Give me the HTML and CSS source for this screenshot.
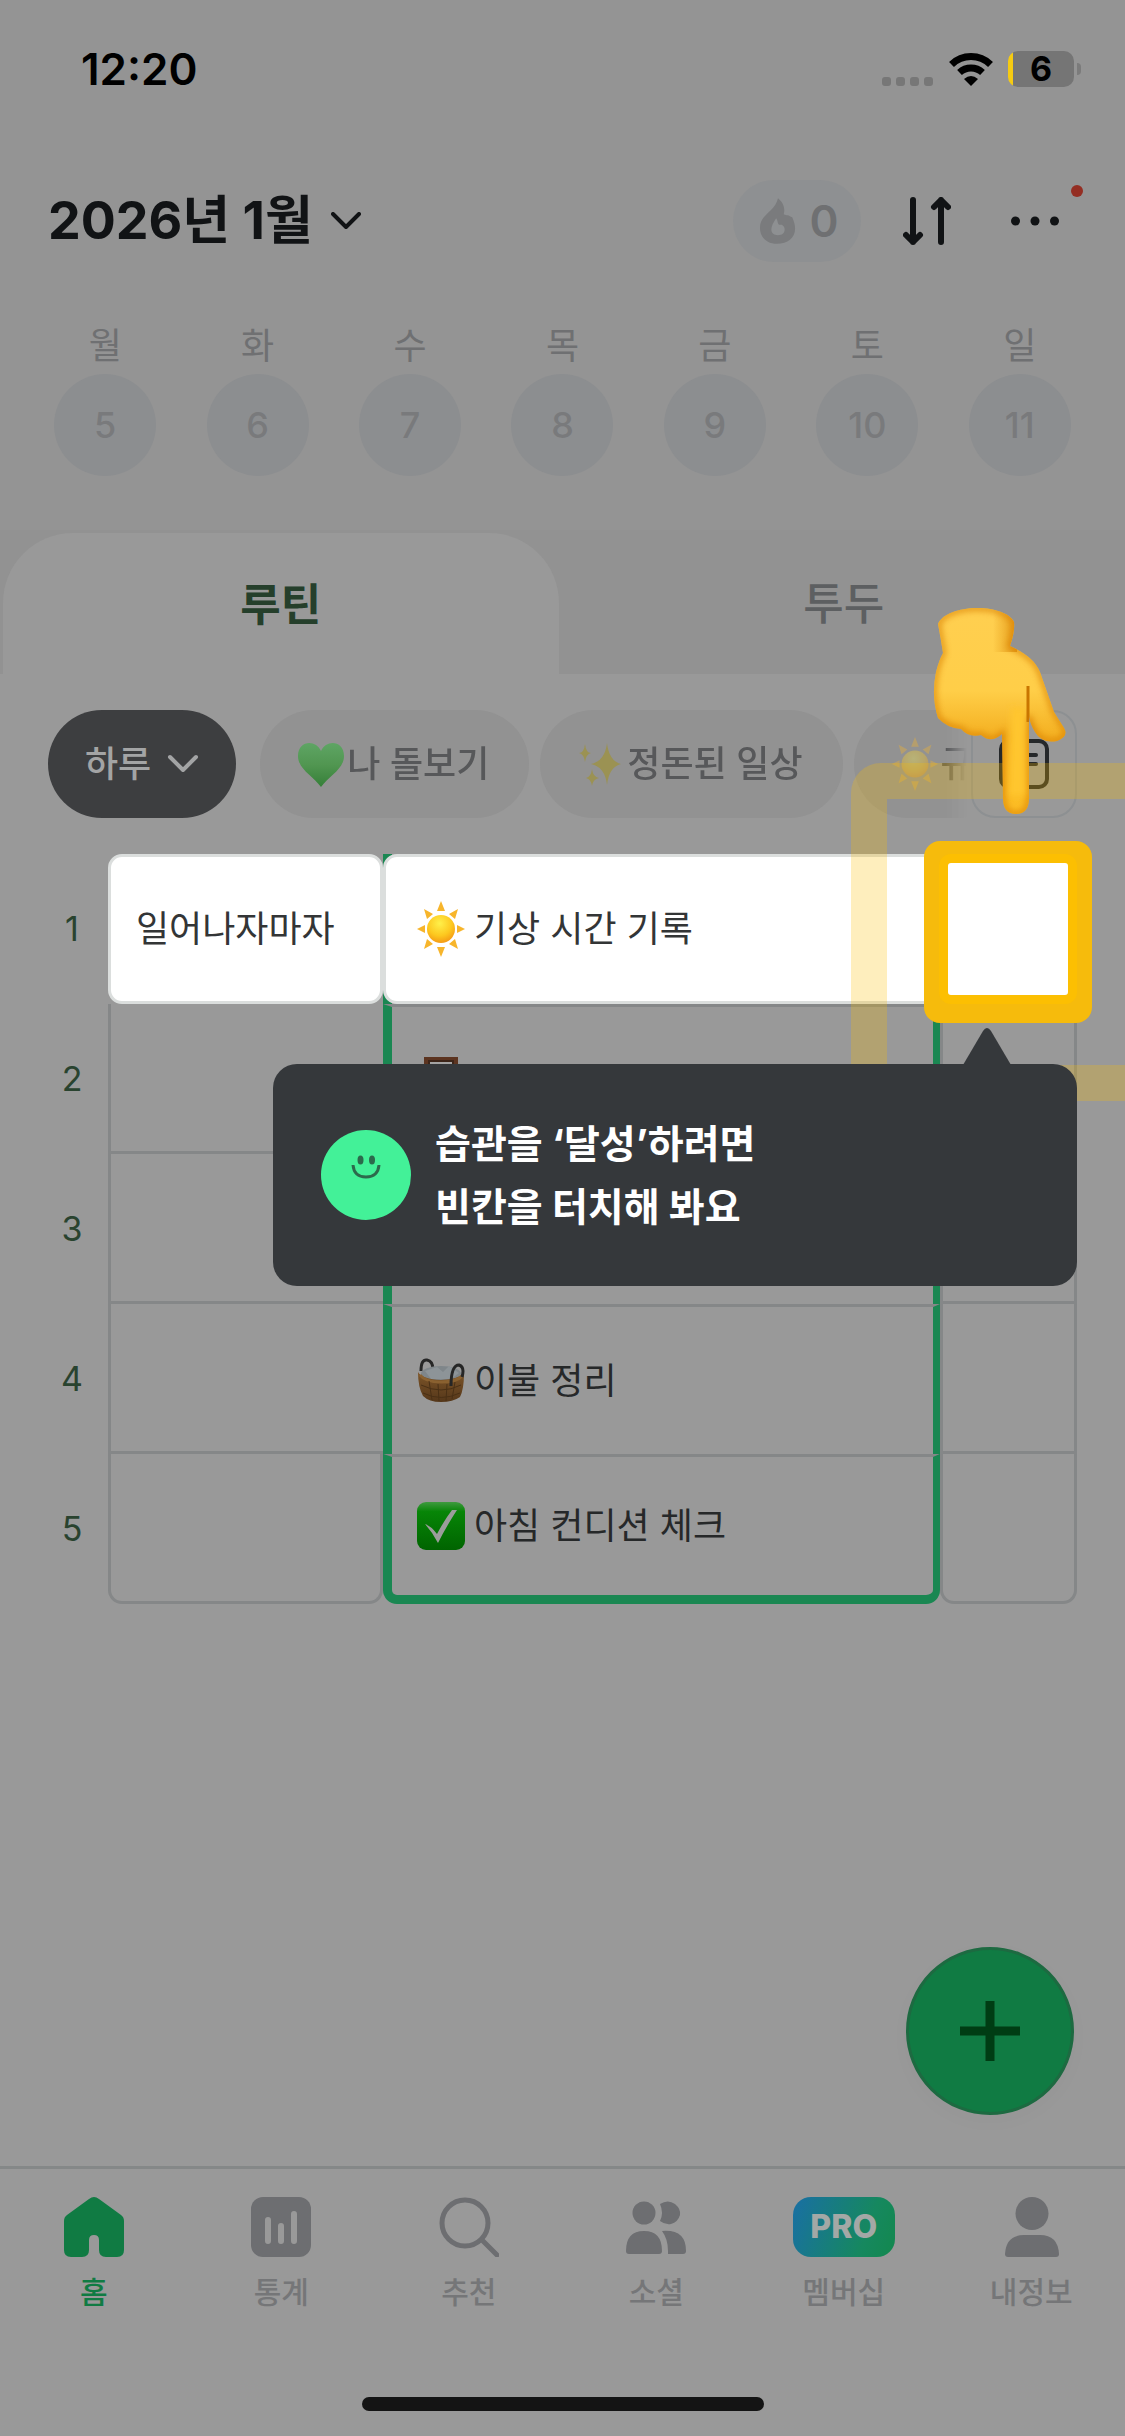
FILE: index.html
```html
<!DOCTYPE html>
<html lang="ko">
<head>
<meta charset="utf-8">
<meta name="viewport" content="width=device-width, initial-scale=1">
<title>루틴</title>
<link rel="stylesheet" href="styles.css">
</head>
<body>
<svg class="defs" aria-hidden="true">
  <defs>
    <radialGradient id="sunFill" cx=".45" cy=".3" r=".8"><stop offset="0" stop-color="#fff04a"/><stop offset=".55" stop-color="#fdc81f"/><stop offset="1" stop-color="#f28a10"/></radialGradient>
    <linearGradient id="heartFill" x1="0" y1="0" x2="0" y2="1"><stop offset="0" stop-color="#5ea564"/><stop offset=".5" stop-color="#519651"/><stop offset="1" stop-color="#357f38"/></linearGradient>
    <linearGradient id="handFill" x1="0" y1="0" x2="0" y2="1"><stop offset="0" stop-color="#ffcf50"/><stop offset=".4" stop-color="#ffce48"/><stop offset=".62" stop-color="#f4b021"/><stop offset="1" stop-color="#fdbf25"/></linearGradient>
    <linearGradient id="wristShade" x1="0" y1="0" x2="1" y2="0"><stop offset="0" stop-color="#d98400" stop-opacity="0"/><stop offset="1" stop-color="#d98400"/></linearGradient>
    <linearGradient id="checkFill" x1="0" y1="0" x2="0" y2="1"><stop offset="0" stop-color="#3f9a3f"/><stop offset=".2" stop-color="#078507"/><stop offset="1" stop-color="#006400"/></linearGradient>
    <linearGradient id="basketFill" x1="0" y1="0" x2="0" y2="1"><stop offset="0" stop-color="#7d5528"/><stop offset="1" stop-color="#55371a"/></linearGradient>
    <filter id="soft" x="-20%" y="-20%" width="140%" height="140%"><feGaussianBlur stdDeviation="3"/></filter>
    <clipPath id="handClip"><path d="M5 16 C14 -5 72 -5 81 14 Q82 24 77 38 C92 45 102 52 107 64 L121 104 L131 120 Q136 129 124 133 Q109 136 102 124 Q97 116 96 108 L96 190 Q96 206 83 206 Q70 206 70 190 L69 126 Q58 136 48 127 Q36 130 28 121 Q14 120 5 110 Q-2 88 3 64 Q6 52 10 45 Q8 32 5 16Z"/></clipPath>
    <symbol id="sun" viewBox="0 0 48 56">
      <path fill="#f7b52b" d="M24 0l4 10h-8zM24 56l4-10h-8zM0 28l8-4v8zM48 28l-8-4v8zM7 8l9 5-6 5zM41 8l-9 5 6 5zM7 48l9-5-6-5zM41 48l-9-5 6-5z"/>
      <circle cx="24" cy="28" r="14" fill="url(#sunFill)"/>
    </symbol>
  </defs>
</svg>

<header class="top">
  <div class="status">
    <time class="clock">12:20</time>
    <div class="status-icons">
      <div class="signal"><i></i><i></i><i></i><i></i></div>
      <svg class="wifi" viewBox="0 0 46 34" aria-label="Wi-Fi"><path d="M3.500 12.500a28 28 0 0 1 39 0" fill="none" stroke="#000" stroke-width="7"/><path d="M11.500 20.500a17 17 0 0 1 23 0" fill="none" stroke="#000" stroke-width="7"/><path d="M16 27q7-6 14 0l-7 7z"/></svg>
      <div class="battery"><span>6</span></div>
      <i class="battery-cap"></i>
    </div>
  </div>

  <div class="title-bar">
    <button class="month">2026년 1월
      <svg width="30" height="18" viewBox="0 0 30 18"><path d="M2 2l13 13L28 2"/></svg>
    </button>
    <div class="actions">
      <button class="streak">
        <svg width="38" height="48" viewBox="0 0 40 48"><path fill="#7a7b7d" fill-rule="evenodd" d="M20 0c5 4 8 10 6 17 2 1 3 1 4 1 2 0 3 2 5 2 2 5 3 8 3 12C38 42 30 48 19 48 8 48 1 41 1 31 1 17 17 14 20 0zM18 21c-3 5-5 8-5 12 0 4 3 6 7 6s7-2 7-6c0-2-1-4-3-5h-3c-2-2-1-5-3-7z"/></svg>
        0
      </button>
      <button class="icon-button" aria-label="정렬"><svg width="48" height="48" viewBox="0 0 48 48"><path d="M10 3v42M3 38l7 7 7-7M38 45V3M31 10l7-7 7 7"/></svg></button>
      <button class="icon-button more" aria-label="더보기"><svg width="48" height="48" viewBox="0 0 48 48"><g fill="#111315" stroke="none"><circle cx="4.500" cy="24" r="4.500"/><circle cx="24" cy="24" r="4.500"/><circle cx="43.500" cy="24" r="4.500"/></g></svg><i class="alert"></i></button>
    </div>
  </div>

  <div class="week">
    <div class="day"><span>월</span><button>5</button></div>
    <div class="day"><span>화</span><button>6</button></div>
    <div class="day"><span>수</span><button>7</button></div>
    <div class="day"><span>목</span><button>8</button></div>
    <div class="day"><span>금</span><button>9</button></div>
    <div class="day"><span>토</span><button>10</button></div>
    <div class="day"><span>일</span><button>11</button></div>
  </div>

  <div class="tabs" role="tablist">
    <button class="tab active" role="tab" aria-selected="true">루틴</button>
    <button class="tab" role="tab" aria-selected="false">투두</button>
  </div>
</header>

<main class="content">
  <div class="filters">
    <button class="chip period">하루 <svg width="32" height="20" viewBox="0 0 32 20"><path d="M3 3l13 13L29 3"/></svg></button>
    <div class="chip-list">
      <button class="chip"><svg width="48" height="47" viewBox="0 0 48 47"><path fill="url(#heartFill)" d="M24 10C29-2 47-1 47 15 47 28 32 35 24 46 16 35 1 28 1 15 1-1 19-2 24 10z"/></svg>나 돌보기</button>
      <button class="chip"><svg width="48" height="54" viewBox="0 0 48 54"><path fill="#9b9253" d="M30 6q2 18 14 21-12 3-14 21-2-18-16-21 14-3 16-21zM8 7q1 9 6 9-5 1-6 9-1-8-6-9 5 0 6-9zM15 32q1 8 7 9-6 1-7 8-1-7-6-8 5-1 6-9z"/></svg>정돈된 일상</button>
      <button class="chip"><svg class="muted" width="48" height="54"><use href="#sun"/></svg>규</button>
    </div>
    <button class="list-button" aria-label="목록"><svg width="50" height="50" viewBox="0 0 50 50"><rect x="2" y="2" width="46" height="46" rx="8"/><path d="M14 16h23M14 25h23"/></svg></button>
  </div>

  <table class="routines">
    <colgroup><col class="col-no"><col class="col-when"><col><col class="col-check"></colgroup>
    <tbody>
      <tr class="current">
        <th scope="row">1</th>
        <td class="when"><div class="card">일어나자마자</div></td>
        <td class="habit"><div class="card"><svg class="emoji" width="48" height="56"><use href="#sun"/></svg>기상 시간 기록</div></td>
        <td class="check">
          <i class="ripple"></i>
          <button class="target" aria-label="달성"></button>
          <svg class="hand" viewBox="0 0 134 207" aria-hidden="true">
            <g clip-path="url(#handClip)">
              <rect width="134" height="207" fill="url(#handFill)"/>
              <rect x="60" width="24" height="44" fill="url(#wristShade)" opacity=".7"/>
              <path d="M5 16 C14 -5 72 -5 81 14 Q82 24 77 38 C92 45 102 52 107 64 L121 104 L131 120 Q136 129 124 133 Q109 136 102 124 Q97 116 96 108 L96 190 Q96 206 83 206 Q70 206 70 190 L69 126 Q58 136 48 127 Q36 130 28 121 Q14 120 5 110 Q-2 88 3 64 Q6 52 10 45 Q8 32 5 16Z" fill="none" stroke="#d97f00" stroke-width="5" opacity=".8" filter="url(#soft)"/>
              <path d="M78 100h14v88H76z" fill="#ffc62f" filter="url(#soft)"/>
              <path d="M95 78v36" stroke="#c97600" stroke-width="3"/>
            </g>
          </svg>
          <div class="tooltip" role="tooltip">
            <svg class="arrow" width="50" height="38" viewBox="0 0 50 38"><path d="M1 38L21 4q4-6 8 0l20 34z"/></svg>
            <svg class="face" width="90" height="90" viewBox="0 0 90 90"><circle cx="45" cy="45" r="45" fill="#43f198"/><ellipse cx="39.500" cy="30" rx="3" ry="4.500" fill="#2c6a4c"/><ellipse cx="51" cy="30" rx="3" ry="4.500" fill="#2c6a4c"/><path d="M32 35q1 12 13 12t13-12" fill="none" stroke="#2c6a4c" stroke-width="3"/></svg>
            <p>습관을 ‘달성’하려면<br>빈칸을 터치해 봐요</p>
          </div>
        </td>
      </tr>
      <tr>
        <th scope="row">2</th><td class="when"></td>
        <td class="habit"><div class="item"><svg class="emoji" width="48" height="48" viewBox="0 0 48 48"><rect x="9" y="1" width="30" height="46" fill="#999" stroke="#5c3420" stroke-width="4"/><rect x="12" y="4" width="24" height="40" fill="#a3a3a3" stroke="#3c2418" stroke-width="2"/></svg></div></td>
        <td class="check"></td>
      </tr>
      <tr><th scope="row">3</th><td class="when"></td><td class="habit"></td><td class="check"></td></tr>
      <tr>
        <th scope="row">4</th><td class="when"></td>
        <td class="habit"><div class="item"><svg class="emoji" width="48" height="48" viewBox="0 0 48 48"><path d="M4 14Q4 2 10 3q6 1 6 10" fill="none" stroke="#262626" stroke-width="3"/><ellipse cx="24" cy="17" rx="20" ry="8" fill="#7f868a"/><path d="M8 14l12-4 6 5 6-6 10 7-8 6H14z" fill="#8d9498"/><path fill="url(#basketFill)" d="M1 15q4 7 23 8 18-1 23-7 0 16-4 24-7 5-19 5T6 39Q1 30 1 15z"/><path d="M3 18q5 7 21 7t21-6" fill="none" stroke="#8a6130" stroke-width="3"/><path d="M4 28q20 10 40 0M6 36q18 9 37 0M12 24l3 19M21 27l1 17M30 27l-1 17M38 25l-3 17" fill="none" stroke="#4a3015" stroke-width="1"/><path d="M34 29Q34 8 42 8q6 2 3 12" fill="none" stroke="#262626" stroke-width="3"/></svg>이불 정리</div></td>
        <td class="check"></td>
      </tr>
      <tr class="last">
        <th scope="row">5</th><td class="when"></td>
        <td class="habit"><div class="item"><svg class="emoji" width="48" height="48" viewBox="0 0 48 48"><rect width="48" height="48" rx="9" fill="url(#checkFill)"/><path d="M8 22q6 2 12 10Q28 17 35 8h5Q29 25 21 41q-5-10-13-19z" fill="#9b9d9b"/></svg>아침 컨디션 체크</div></td>
        <td class="check"></td>
      </tr>
    </tbody>
  </table>

  <button class="add" aria-label="추가"><svg width="60" height="60" viewBox="0 0 60 60"><path d="M30 0v60M0 30h60"/></svg></button>
</main>

<footer class="bottom">
  <nav class="nav">
    <a class="active" href="#home"><svg width="60" height="60" viewBox="0 0 60 60"><path fill="#107b43" d="M25 2q5-4 10 0l22 16q3 2 3 6v29q0 7-7 7H42q-7 0-7-7V43q0-5-5-5t-5 5v10q0 7-7 7H7q-7 0-7-7V24q0-4 3-6z"/></svg>홈</a>
    <a href="#stats"><svg width="60" height="60" viewBox="0 0 60 60"><rect width="60" height="60" rx="12" fill="#6d6e71"/><path d="M17 23v21M30 29v15M43 17v27" stroke="#999" stroke-width="6" stroke-linecap="round"/></svg>통계</a>
    <a href="#discover"><svg width="60" height="60" viewBox="0 0 60 60"><circle cx="26" cy="26" r="23" fill="none" stroke="#6d6e71" stroke-width="5"/><path d="M43 43l15 15" stroke="#6d6e71" stroke-width="5" stroke-linecap="round"/></svg>추천</a>
    <a href="#social"><svg width="60" height="60" viewBox="0 0 60 60" fill="#6d6e71"><circle cx="18" cy="16" r="11.500"/><path d="M34 7q8-5 15 0 6 5 5 11-2 7-9 9-6 1-11-3 4-8 0-17zM0 54Q0 34 18 34t18 20q0 3-3 3H3q-3 0-3-3zM36 34q24-2 24 20 0 3-3 3H42V54q0-12-6-20z"/></svg>소셜</a>
    <a href="#membership"><span class="pro">PRO</span>멤버십</a>
    <a href="#me"><svg width="60" height="60" viewBox="0 0 60 60" fill="#6d6e71"><circle cx="31" cy="16.500" r="16.500"/><path d="M4 57Q5 38 23 38h16q18 0 19 19 0 3-3 3H7q-3 0-3-3z"/></svg>내정보</a>
  </nav>
  <i class="home-indicator"></i>
</footer>
</body>
</html>
```
FILE: styles.css
```css
* { box-sizing: border-box; }

body {
  margin: 0;
  min-height: 100vh;
  display: flex;
  flex-direction: column;
  overflow-x: hidden;
  background: #999;
  color: #262829;
  font-family: Inter, "Noto Sans CJK KR", sans-serif;
  font-size: 36px;
  line-height: 44px;
}

button {
  margin: 0;
  padding: 0;
  border: 0;
  background: none;
  color: inherit;
  font: inherit;
}

svg { display: block; flex: none; }
.defs { position: absolute; width: 0; height: 0; }

/* Header */
.top { background: #949494; }

.status {
  display: flex;
  align-items: center;
  justify-content: space-between;
  height: 138px;
  padding: 0 44px 0 81px;
  color: #000;
}
.clock { font-size: 44px; font-weight: 600; }
.status-icons { display: flex; align-items: center; }
.signal { display: flex; gap: 5px; padding-top: 24px; margin-right: 15px; }
.signal i { width: 9px; height: 9px; border-radius: 3px; background: #777; }
.wifi { width: 46px; height: 34px; margin-right: 14px; }
.battery {
  width: 66px;
  height: 36px;
  border-radius: 10px;
  background: linear-gradient(90deg, #f6cb12 5px, #757575 5px);
  text-align: center;
  font-size: 34px;
  font-weight: 700;
  line-height: 36px;
}
.battery-cap { width: 4px; height: 12px; margin-left: 3px; border-radius: 0 4px 4px 0; background: #7b7b7b; }

.title-bar {
  display: flex;
  align-items: center;
  justify-content: space-between;
  height: 166px;
  padding: 0 66px 0 48px;
  color: #111315;
}
.month { display: flex; align-items: center; gap: 18px; font-size: 52px; font-weight: 700; line-height: 64px; }
.month svg, .icon-button svg { fill: none; stroke: #111315; stroke-width: 4px; stroke-linecap: round; stroke-linejoin: round; }
.icon-button svg { stroke-width: 6px; }
.actions { display: flex; align-items: center; }
.streak {
  display: flex;
  align-items: center;
  justify-content: center;
  gap: 12px;
  width: 128px;
  height: 82px;
  margin-right: 42px;
  padding-left: 4px;
  border-radius: 41px;
  background: #8e9092;
  color: #6f7072;
  font-size: 44px;
  font-weight: 600;
}
.icon-button + .icon-button { margin-left: 60px; }
.more { position: relative; }
.alert { position: absolute; top: -12px; right: -24px; width: 12px; height: 12px; border-radius: 50%; background: #942e23; }

.week { display: grid; grid-template-columns: repeat(7, 1fr); padding: 20px 29px 54px; }
.day { display: flex; flex-direction: column; align-items: center; gap: 6px; color: #6f7072; }
.day button { width: 102px; height: 102px; border-radius: 50%; background: #8c8e90; color: #797a7c; font-weight: 500; }

.tabs { display: grid; grid-template-columns: 1fr 1fr; height: 144px; background: #929292; }
.tab { padding-top: 4px; color: #5d5f61; font-size: 44px; font-weight: 500; }
.tab.active { margin: 3px 4px 0 3px; padding-top: 2px; border-radius: 70px 70px 0 0; background: #999; color: #253f2b; font-weight: 700; }

/* Content */
.content { flex: 1; display: flex; flex-direction: column; }

.filters { display: flex; gap: 24px; padding: 36px 48px; }
.chip {
  display: flex;
  flex: none;
  gap: 2px;
  align-items: center;
  height: 108px;
  padding: 0 40px 0 37px;
  border-radius: 54px;
  background: #929292;
  color: #57585a;
  font-weight: 500;
}
.chip.period { gap: 16px; padding: 0 37px; background: #3d3e40; color: #a3a4a5; }
.period svg { fill: none; stroke: #a3a4a5; stroke-width: 4px; stroke-linecap: round; stroke-linejoin: round; }
.chip-list { display: flex; flex: 1; min-width: 0; gap: 11px; overflow: hidden; margin-right: -20px; mask-image: linear-gradient(90deg, #000 97%, transparent); }
.muted { opacity: .35; }
.list-button {
  display: grid;
  flex: none;
  place-items: center;
  width: 106px;
  height: 108px;
  border: 2px solid #8d9092;
  border-radius: 24px;
}
.list-button svg { fill: none; stroke: #25282a; stroke-width: 4px; stroke-linecap: round; }

.routines {
  width: auto;
  margin: 0 48px 0 36px;
  border-spacing: 0;
  table-layout: fixed;
}
.col-no { width: 72px; }
.col-when { width: 275px; }
.col-check { width: 137px; }
.routines th, .routines td { height: 150px; padding: 0; }
.routines th { color: #29432f; font-size: 34px; font-weight: 400; text-align: center; }
.when { border: solid #858788; border-width: 0 0 3px 3px; }
.habit { border: solid #1a8752; border-width: 3px 7px 0 9px; border-top-color: #858788; }
.check { border: solid #858788; border-width: 0 3px 3px; }
.item, .card { display: flex; align-items: center; }
.item { padding-left: 25px; }
.emoji { margin-right: 9px; }
.last .when, .last .check { border-radius: 0 0 14px 14px; }
.last .when { border-right-width: 3px; border-right-color: #858788; }
.last .habit { border-bottom-width: 9px; border-radius: 0 0 14px 14px; }

.current td { border: 0; }
.current .habit { background: linear-gradient(#1a8752, #1a8752) left / 9px 100% no-repeat; }
.card { height: 150px; border: 3px solid #dbdedd; border-radius: 14px; background: #fff; color: #333536; }
.when .card { padding-left: 25px; }
.habit .card { padding-left: 31px; }

/* Coach mark over the first check cell */
.current .check { position: relative; }
.ripple {
  position: absolute;
  inset: -91px -89px -97px;
  border: 36px solid rgba(250, 190, 0, .26);
  border-radius: 30px;
}
.target {
  position: absolute;
  inset: -13px -15px -19px -16px;
  border: solid #f6bb0c;
  border-width: 22px 24px 28px;
  border-radius: 16px;
  background: #fff;
}
.target::before {
  content: "";
  position: absolute;
  inset: -9px;
  border: 9px solid #fcbf02;
  border-radius: 12px;
}
.hand { position: absolute; top: -246px; left: -7px; width: 134px; height: 207px; }
.tooltip {
  position: absolute;
  top: 210px;
  right: 0;
  display: flex;
  align-items: center;
  gap: 24px;
  width: 804px;
  height: 222px;
  padding-left: 48px;
  border-radius: 24px;
  background: #35383b;
  color: #fff;
  font-size: 39px;
  font-weight: 700;
  line-height: 63px;
}
.tooltip p { margin: 0; }
.arrow { position: absolute; top: -37px; right: 65px; fill: #35383b; }

.add {
  display: grid;
  place-items: center;
  width: 168px;
  height: 168px;
  margin: auto 51px 51px auto;
  border: 3px solid #1d6a41;
  border-radius: 50%;
  background: #107b43;
  box-shadow: 0 6px 24px rgba(0, 0, 0, .02);
}
.add svg { stroke: #003d14; stroke-width: 9px; }

/* Bottom navigation */
.bottom { display: flex; flex-direction: column; align-items: center; gap: 87px; padding-bottom: 25px; border-top: 3px solid #858888; }
.nav { display: grid; grid-template-columns: repeat(6, 1fr); width: 100%; padding-top: 28px; }
.nav a {
  display: flex;
  flex-direction: column;
  align-items: center;
  gap: 17px;
  color: #757678;
  font-size: 30px;
  font-weight: 500;
  line-height: 36px;
  text-decoration: none;
}
.nav a.active { color: #107b43; }
.pro {
  width: 102px;
  height: 60px;
  border-radius: 18px;
  background: linear-gradient(110deg, #196fa4, #16885f 70%, #13884e);
  color: #a3a8a6;
  font-size: 32px;
  font-weight: 800;
  line-height: 60px;
  text-align: center;
}
.home-indicator { width: 402px; height: 14px; border-radius: 7px; background: #141414; }
```
